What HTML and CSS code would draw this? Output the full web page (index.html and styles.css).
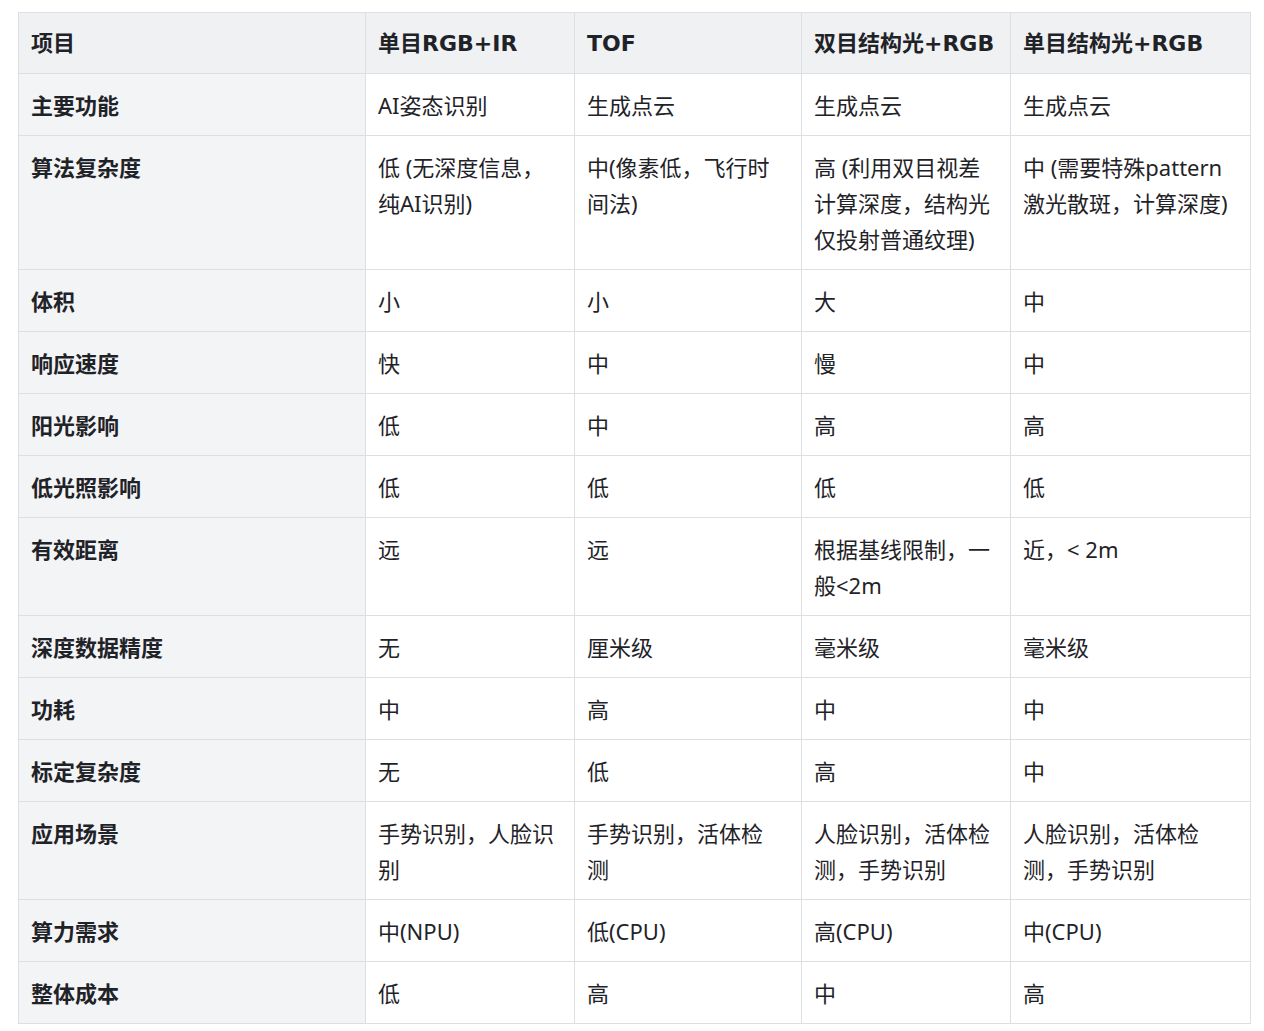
FILE: index.html
```html
<!DOCTYPE html>
<html lang="zh-CN">
<head>
<meta charset="utf-8">
<title>对比表</title>
<link rel="stylesheet" href="styles.css">
</head>
<body>
<table class="cmp">
  <colgroup>
    <col class="c1"><col class="c2"><col class="c3"><col class="c4"><col class="c5">
  </colgroup>
  <thead>
    <tr><th>项目</th><th>单目RGB+IR</th><th>TOF</th><th>双目结构光+RGB</th><th>单目结构光+RGB</th></tr>
  </thead>
  <tbody>
    <tr><th>主要功能</th><td>AI姿态识别</td><td>生成点云</td><td>生成点云</td><td>生成点云</td></tr>
    <tr><th>算法复杂度</th><td>低 (无深度信息，纯AI识别)</td><td>中(像素低，飞行时间法)</td><td>高 (利用双目视差计算深度，结构光仅投射普通纹理)</td><td>中 (需要特殊pattern激光散斑，计算深度)</td></tr>
    <tr><th>体积</th><td>小</td><td>小</td><td>大</td><td>中</td></tr>
    <tr><th>响应速度</th><td>快</td><td>中</td><td>慢</td><td>中</td></tr>
    <tr><th>阳光影响</th><td>低</td><td>中</td><td>高</td><td>高</td></tr>
    <tr><th>低光照影响</th><td>低</td><td>低</td><td>低</td><td>低</td></tr>
    <tr><th>有效距离</th><td>远</td><td>远</td><td>根据基线限制，一般&lt;2m</td><td>近，&lt; 2m</td></tr>
    <tr><th>深度数据精度</th><td>无</td><td>厘米级</td><td>毫米级</td><td>毫米级</td></tr>
    <tr><th>功耗</th><td>中</td><td>高</td><td>中</td><td>中</td></tr>
    <tr><th>标定复杂度</th><td>无</td><td>低</td><td>高</td><td>中</td></tr>
    <tr><th>应用场景</th><td>手势识别，人脸识别</td><td>手势识别，活体检测</td><td>人脸识别，活体检测，手势识别</td><td>人脸识别，活体检测，手势识别</td></tr>
    <tr><th>算力需求</th><td>中(NPU)</td><td>低(CPU)</td><td>高(CPU)</td><td>中(CPU)</td></tr>
    <tr><th>整体成本</th><td>低</td><td>高</td><td>中</td><td>高</td></tr>
  </tbody>
</table>
</body>
</html>
```
FILE: styles.css
```css
html, body {
  margin: 0;
  padding: 0;
  background: #ffffff;
}
body {
  font-family: "Noto Sans", "Noto Sans CJK SC", sans-serif;
  color: #1f2328;
}
.cmp {
  margin: 12px 0 0 18px;
  border-collapse: collapse;
  table-layout: fixed;
  width: 1232px;
  font-size: 22px;
  line-height: 36px;
}
.c1 { width: 347px; }
.c2 { width: 209px; }
.c3 { width: 227px; }
.c4 { width: 209px; }
.c5 { width: 240px; }
.cmp th,
.cmp td {
  border: 1px solid #dcdfe3;
  padding: 13px 18px 12px 12px;
  text-align: left;
  vertical-align: top;
}
.cmp th {
  font-weight: 700;
  background: #f3f4f6;
}
.cmp thead th {
  background: #f0f1f3;
  padding: 13px 8px 11px 12px;
  white-space: nowrap;
  font-family: "DejaVu Sans", "Noto Sans CJK SC", sans-serif;
}
.cmp td {
  font-weight: 400;
  background: #ffffff;
}
```
